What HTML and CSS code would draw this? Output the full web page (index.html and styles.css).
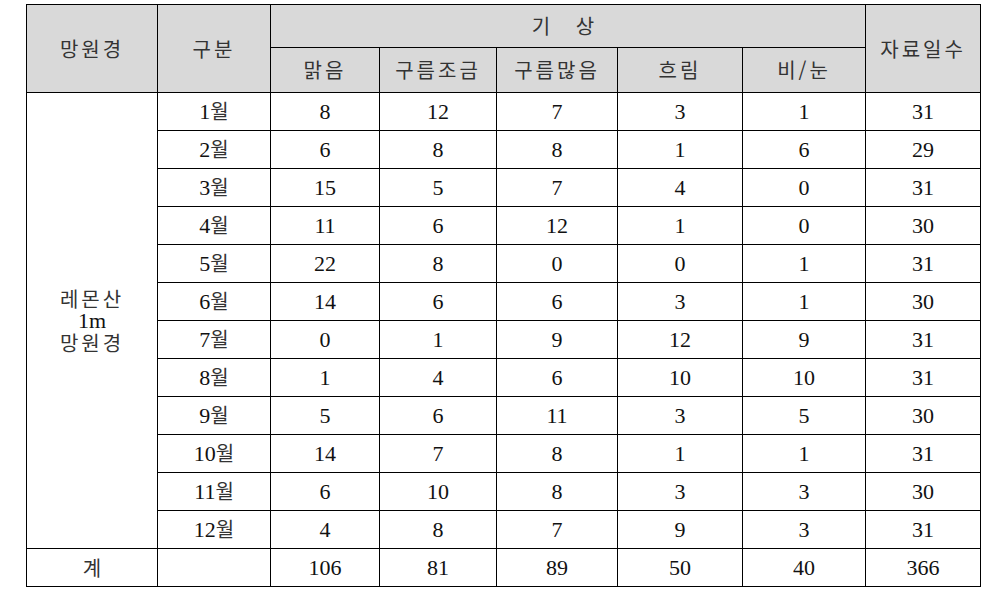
FILE: index.html
```html
<!DOCTYPE html>
<html lang="ko">
<head>
<meta charset="utf-8">
<link rel="stylesheet" href="styles.css">
</head>
<body>
<table class="wx">
  <colgroup>
    <col class="c1"><col class="c2"><col class="c3"><col class="c4"><col class="c5"><col class="c6"><col class="c7"><col class="c8">
  </colgroup>
  <thead>
    <tr class="h1">
      <th rowspan="2" class="ko sp">망원경</th>
      <th rowspan="2" class="ko sp">구분</th>
      <th colspan="5" class="ko wide">기 상</th>
      <th rowspan="2" class="ko sp">자료일수</th>
    </tr>
    <tr class="h2">
      <th class="ko sp">맑음</th>
      <th class="ko sp">구름조금</th>
      <th class="ko sp">구름많음</th>
      <th class="ko sp">흐림</th>
      <th class="ko sp">비/눈</th>
    </tr>
  </thead>
  <tbody>
    <tr><td rowspan="12" class="ko name"><div>레몬산</div><div class="num">1m</div><div>망원경</div></td><td class="m"><span class="num">1</span>월</td><td>8</td><td>12</td><td>7</td><td>3</td><td>1</td><td>31</td></tr>
    <tr><td class="m"><span class="num">2</span>월</td><td>6</td><td>8</td><td>8</td><td>1</td><td>6</td><td>29</td></tr>
    <tr><td class="m"><span class="num">3</span>월</td><td>15</td><td>5</td><td>7</td><td>4</td><td>0</td><td>31</td></tr>
    <tr><td class="m"><span class="num">4</span>월</td><td>11</td><td>6</td><td>12</td><td>1</td><td>0</td><td>30</td></tr>
    <tr><td class="m"><span class="num">5</span>월</td><td>22</td><td>8</td><td>0</td><td>0</td><td>1</td><td>31</td></tr>
    <tr><td class="m"><span class="num">6</span>월</td><td>14</td><td>6</td><td>6</td><td>3</td><td>1</td><td>30</td></tr>
    <tr><td class="m"><span class="num">7</span>월</td><td>0</td><td>1</td><td>9</td><td>12</td><td>9</td><td>31</td></tr>
    <tr><td class="m"><span class="num">8</span>월</td><td>1</td><td>4</td><td>6</td><td>10</td><td>10</td><td>31</td></tr>
    <tr><td class="m"><span class="num">9</span>월</td><td>5</td><td>6</td><td>11</td><td>3</td><td>5</td><td>30</td></tr>
    <tr><td class="m"><span class="num">10</span>월</td><td>14</td><td>7</td><td>8</td><td>1</td><td>1</td><td>31</td></tr>
    <tr><td class="m"><span class="num">11</span>월</td><td>6</td><td>10</td><td>8</td><td>3</td><td>3</td><td>30</td></tr>
    <tr><td class="m"><span class="num">12</span>월</td><td>4</td><td>8</td><td>7</td><td>9</td><td>3</td><td>31</td></tr>
    <tr><td class="ko">계</td><td></td><td>106</td><td>81</td><td>89</td><td>50</td><td>40</td><td>366</td></tr>
  </tbody>
</table>
</body>
</html>
```
FILE: styles.css
```css
html, body {
  margin: 0;
  padding: 0;
  background: #fff;
}
body {
  padding: 4px 0 0 26px;
}
.wx {
  border-collapse: collapse;
  table-layout: fixed;
  width: 954px;
  font-family: "Liberation Serif", "Noto Sans CJK KR", serif;
  font-size: 22px;
  color: #111;
}
.c1 { width: 131px; }
.c2 { width: 113px; }
.c3 { width: 109px; }
.c4 { width: 117px; }
.c5 { width: 121px; }
.c6 { width: 125px; }
.c7 { width: 123px; }
.c8 { width: 115px; }
.wx th, .wx td {
  border: 1px solid #000;
  text-align: center;
  vertical-align: middle;
  padding: 0;
  font-weight: normal;
  line-height: 1;
}
.wx thead th {
  background: #d9d9d9;
}
.h1 { height: 43px; }
.h2 { height: 45px; }
.wx tbody tr { height: 38px; }
.ko {
  font-family: "Noto Sans CJK KR", "Liberation Serif", sans-serif;
  font-size: 20px;
  font-weight: 300;
  color: #333;
}
.sp { letter-spacing: 3px; }
.wide { letter-spacing: 10px; }
.m {
  font-family: "Noto Sans CJK KR", sans-serif;
  font-size: 20px;
  font-weight: 300;
  color: #333;
}
.num {
  font-family: "Liberation Serif", serif;
  font-size: 22px;
  font-weight: normal;
  color: #111;
}
.name {
  letter-spacing: 3px;
}
.name div {
  height: 22px;
  line-height: 22px;
}
.name .num { letter-spacing: 0; }
```
